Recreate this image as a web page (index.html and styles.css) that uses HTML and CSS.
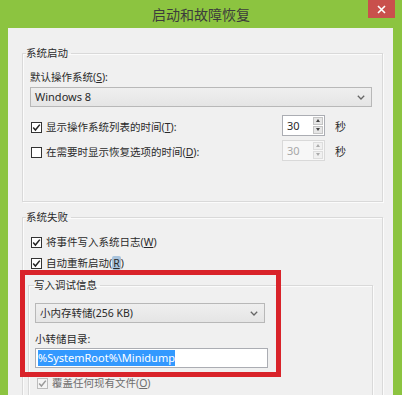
FILE: index.html
```html
<!DOCTYPE html>
<html lang="zh-CN">
<head>
<meta charset="utf-8">
<title>启动和故障恢复</title>
<link rel="stylesheet" href="styles.css">
</head>
<body>
<div class="window">
  <div class="titlebar">
    <span class="title">启动和故障恢复</span>
    <span class="close">
      <svg width="9" height="9" viewBox="0 0 9 9"><path d="M1 1 L8 8 M8 1 L1 8" stroke="#fff" stroke-width="1.6" fill="none"/></svg>
    </span>
  </div>
  <div class="client">
    <fieldset class="group g1">
      <legend>系统启动</legend>
      <div class="label">默认操作系统(<u>S</u>):</div>
      <div class="combo wide">
        <span class="latin">Windows 8</span>
        <svg class="chev" width="8" height="5" viewBox="0 0 8 5"><path d="M0.8 0.8 L4 4 L7.2 0.8" stroke="#666" stroke-width="1.3" fill="none"/></svg>
      </div>
      <div class="row first">
        <div class="check">
          <span class="box"><svg width="9" height="9" viewBox="0 0 9 9"><path d="M1.2 4.6 L3.4 7 L7.8 1.6" stroke="#222" stroke-width="1.5" fill="none"/></svg></span>
          <span>显示操作系统列表的时间(<u>T</u>):</span>
        </div>
        <div class="spin">
          <span class="val latin">30</span>
          <span class="btns"><i class="up"></i><i class="down"></i></span>
        </div>
        <span class="unit">秒</span>
      </div>
      <div class="row">
        <div class="check">
          <span class="box"></span>
          <span>在需要时显示恢复选项的时间(<u>D</u>):</span>
        </div>
        <div class="spin disabled">
          <span class="val latin">30</span>
          <span class="btns"><i class="up"></i><i class="down"></i></span>
        </div>
        <span class="unit">秒</span>
      </div>
    </fieldset>

    <fieldset class="group g2">
      <legend>系统失败</legend>
      <div class="check line first">
        <span class="box"><svg width="9" height="9" viewBox="0 0 9 9"><path d="M1.2 4.6 L3.4 7 L7.8 1.6" stroke="#222" stroke-width="1.5" fill="none"/></svg></span>
        <span>将事件写入系统日志(<u>W</u>)</span>
      </div>
      <div class="check line second">
        <span class="box"><svg width="9" height="9" viewBox="0 0 9 9"><path d="M1.2 4.6 L3.4 7 L7.8 1.6" stroke="#222" stroke-width="1.5" fill="none"/></svg></span>
        <span>自动重新启动(<u class="focus">R</u>)</span>
      </div>

      <fieldset class="group inner">
        <legend>写入调试信息</legend>
        <div class="combo dump">
          <span>小内存转储(256 KB)</span>
          <svg class="chev" width="8" height="5" viewBox="0 0 8 5"><path d="M0.8 0.8 L4 4 L7.2 0.8" stroke="#666" stroke-width="1.3" fill="none"/></svg>
        </div>
        <div class="label dirlabel">小转储目录:</div>
        <div class="input"><span class="sel latin">%SystemRoot%\Minidump</span></div>
        <div class="check line overwrite disabled">
          <span class="box"><svg width="9" height="9" viewBox="0 0 9 9"><path d="M1.2 4.6 L3.4 7 L7.8 1.6" stroke="#9a9a9a" stroke-width="1.5" fill="none"/></svg></span>
          <span>覆盖任何现有文件(<u>O</u>)</span>
        </div>
      </fieldset>
    </fieldset>
  </div>
  <div class="callout"></div>
</div>
</body>
</html>
```

FILE: styles.css
```css
* { box-sizing: border-box; }

html, body {
  margin: 0;
  padding: 0;
}

body {
  width: 402px;
  height: 395px;
  overflow: hidden;
  background: #8cc440;
  font-family: "Noto Sans", "Noto Sans CJK SC", sans-serif;
  font-size: 10.5px;
  line-height: 14px;
  color: #2a2a2a;
}

.window {
  position: relative;
  width: 402px;
  height: 395px;
  display: flex;
  flex-direction: column;
}

.titlebar {
  position: relative;
  flex: none;
  height: 28px;
  display: flex;
  align-items: center;
  justify-content: center;
}

.title {
  font-family: "Noto Sans CJK SC", sans-serif;
  font-size: 14px;
  line-height: 16px;
  color: #3c3c3c;
  margin-top: -1px;
}

.close {
  position: absolute;
  top: 0;
  right: 7px;
  width: 27px;
  height: 18px;
  background: #c9504c;
  display: flex;
  align-items: center;
  justify-content: center;
}

.client {
  flex: 1;
  margin: 0 9px 0 8px;
  background: #f0f0f0;
  padding: 18px 10px 0 14px;
  overflow: hidden;
}

.group {
  margin: 0;
  padding: 0 10px 0 7px;
  border: 1px solid #d9d9d9;
  box-shadow: inset 1px 1px 0 #fbfbfb, 1px 1px 0 #fbfbfb;
  min-width: 0;
}

.group legend {
  padding: 0 3px 0 0;
  margin-left: -4px;
  line-height: 14px;
}

.g1 { padding-bottom: 38px; }

.label { margin-top: 10px; }

.combo {
  height: 20px;
  margin-top: 3px;
  border: 1px solid #b8b8b8;
  background: linear-gradient(#efefef, #e5e5e5);
  display: flex;
  align-items: center;
  justify-content: space-between;
  padding: 0 6px 0 4px;
}

.latin { font-size: 11px; }

.row {
  display: flex;
  align-items: center;
  height: 22px;
  margin-top: 3px;
  padding-right: 26px;
}

.row.first { margin-top: 9px; }

.check {
  display: flex;
  align-items: center;
  gap: 4px;
  flex: 1;
  padding-left: 1px;
}

.box {
  width: 11px;
  height: 11px;
  flex: none;
  border: 1px solid #333;
  background: #fff;
  display: flex;
  align-items: center;
  justify-content: center;
}

.spin {
  width: 43px;
  height: 21px;
  border: 1px solid #abadb3;
  background: #fff;
  display: flex;
  margin-top: -4px;
}

.spin .val {
  flex: 1;
  padding-left: 4px;
  line-height: 19px;
}

.btns {
  width: 12px;
  display: flex;
  flex-direction: column;
  padding: 1px;
  gap: 1px;
}

.btns i {
  flex: 1;
  background: #e6e6e6;
  border: 1px solid #c4c4c4;
  display: flex;
  align-items: center;
  justify-content: center;
}

.btns i::after {
  content: "";
  border-left: 2px solid transparent;
  border-right: 2px solid transparent;
}

.btns .up::after { border-bottom: 3px solid #444; }
.btns .down::after { border-top: 3px solid #444; }

.spin.disabled {
  border-color: #d9d9d9;
  background: #f7f7f7;
  color: #a8a8a8;
}

.spin.disabled .btns i {
  background: #f0f0f0;
  border-color: #dddddd;
}

.spin.disabled .btns .up::after { border-bottom-color: #aaa; }
.spin.disabled .btns .down::after { border-top-color: #aaa; }

.unit {
  margin-left: 10px;
  width: 11px;
  font-size: 11px;
}

.g2 {
  margin-top: 8px;
  padding-bottom: 40px;
}

.check.line { flex: none; }
.check.line.first { margin-top: 11px; }
.check.line.second { margin-top: 7px; }

.focus {
  background: #a8c3dc;
  border-radius: 2px;
  padding: 0 1px;
}

.inner {
  margin: 8px -1px 0 -2px;
  padding: 0 6px 20px 6px;
}

.inner legend { margin-left: -1px; }

.combo.dump {
  width: 230px;
  margin-top: 11px;
}

.dirlabel { margin-top: 9px; }

.input {
  width: 233px;
  height: 20px;
  margin-top: 2px;
  border: 1px solid #abadb3;
  background: #fff;
  padding: 1px 2px;
  display: flex;
  align-items: center;
}

.sel {
  background: #3399ff;
  color: #fff;
  line-height: 16px;
}

.check.line.overwrite {
  margin-top: 8px;
  padding-left: 2px;
}

.check.disabled { color: #6e6e6e; }
.check.disabled .box {
  border-color: #bcbcbc;
  background: #f4f4f4;
}

.callout {
  position: absolute;
  left: 20px;
  top: 270px;
  width: 261px;
  height: 107px;
  border: 5px solid #d9232a;
}
```
